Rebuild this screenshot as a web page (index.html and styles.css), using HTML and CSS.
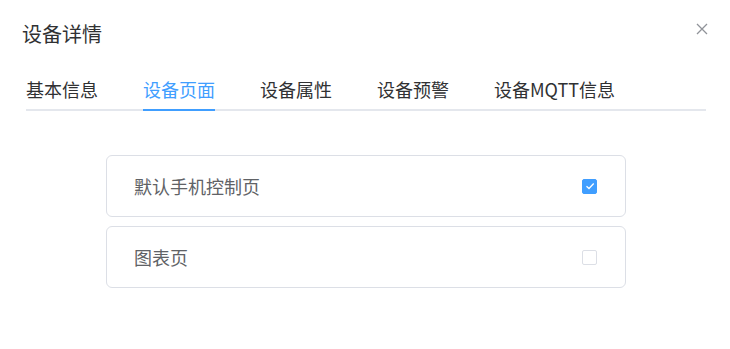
FILE: index.html
```html
<!DOCTYPE html>
<html lang="zh-CN">
<head>
<meta charset="utf-8">
<title>设备详情</title>
<link rel="stylesheet" href="styles.css">
</head>
<body>
<div class="dialog">
  <div class="header">
    <span class="title">设备详情</span>
    <button class="close" aria-label="关闭">
      <svg width="12" height="12" viewBox="0 0 12 12"><path d="M1 1L11 11M11 1L1 11" stroke="#909399" stroke-width="1.3" fill="none"/></svg>
    </button>
  </div>
  <div class="tabs">
    <div class="tab">基本信息</div>
    <div class="tab active">设备页面</div>
    <div class="tab">设备属性</div>
    <div class="tab">设备预警</div>
    <div class="tab">设备MQTT信息</div>
  </div>
  <div class="list">
    <div class="card">
      <span class="label">默认手机控制页</span>
      <span class="check checked">
        <svg width="10" height="8" viewBox="0 0 10 8"><path d="M1.5 4.2L4 6.5L8.7 1.5" stroke="#fff" stroke-width="1.3" fill="none"/></svg>
      </span>
    </div>
    <div class="card">
      <span class="label">图表页</span>
      <span class="check"></span>
    </div>
  </div>
</div>
</body>
</html>
```

FILE: styles.css
```css
* { box-sizing: border-box; }
html, body {
  margin: 0;
  padding: 0;
  background: #fff;
}
body {
  font-family: "Noto Sans CJK SC", "Noto Sans", sans-serif;
  width: 730px;
  height: 349px;
  overflow: hidden;
}
.dialog {
  padding: 0;
}
.header {
  display: flex;
  justify-content: space-between;
  align-items: flex-start;
  padding: 21px 22px 0 22px;
  height: 69px;
}
.title {
  font-size: 20px;
  line-height: 26px;
  color: #303133;
}
.close {
  border: 0;
  background: none;
  padding: 0;
  margin-top: 2px;
  width: 12px;
  height: 12px;
  display: flex;
}
.tabs {
  display: flex;
  margin: 0 24px 0 26px;
  border-bottom: 2px solid #e4e7ed;
  height: 42px;
}
.tab {
  font-size: 18px;
  line-height: 40px;
  height: 42px;
  color: #303133;
  margin-right: 45px;
  border-bottom: 2px solid transparent;
}
.tab.active {
  color: #409eff;
  border-bottom-color: #409eff;
}
.list {
  display: flex;
  flex-direction: column;
  gap: 9px;
  width: 520px;
  margin: 44px 0 0 106px;
}
.card {
  display: flex;
  align-items: center;
  justify-content: space-between;
  height: 62px;
  border: 1px solid #dcdfe6;
  border-radius: 6px;
  padding: 0 28px 0 27px;
}
.label {
  font-size: 18px;
  color: #606266;
}
.check {
  width: 15px;
  height: 15px;
  border: 1px solid #dcdfe6;
  border-radius: 2px;
  background: #fff;
  display: flex;
  align-items: center;
  justify-content: center;
}
.check.checked {
  background: #409eff;
  border-color: #409eff;
}
```
